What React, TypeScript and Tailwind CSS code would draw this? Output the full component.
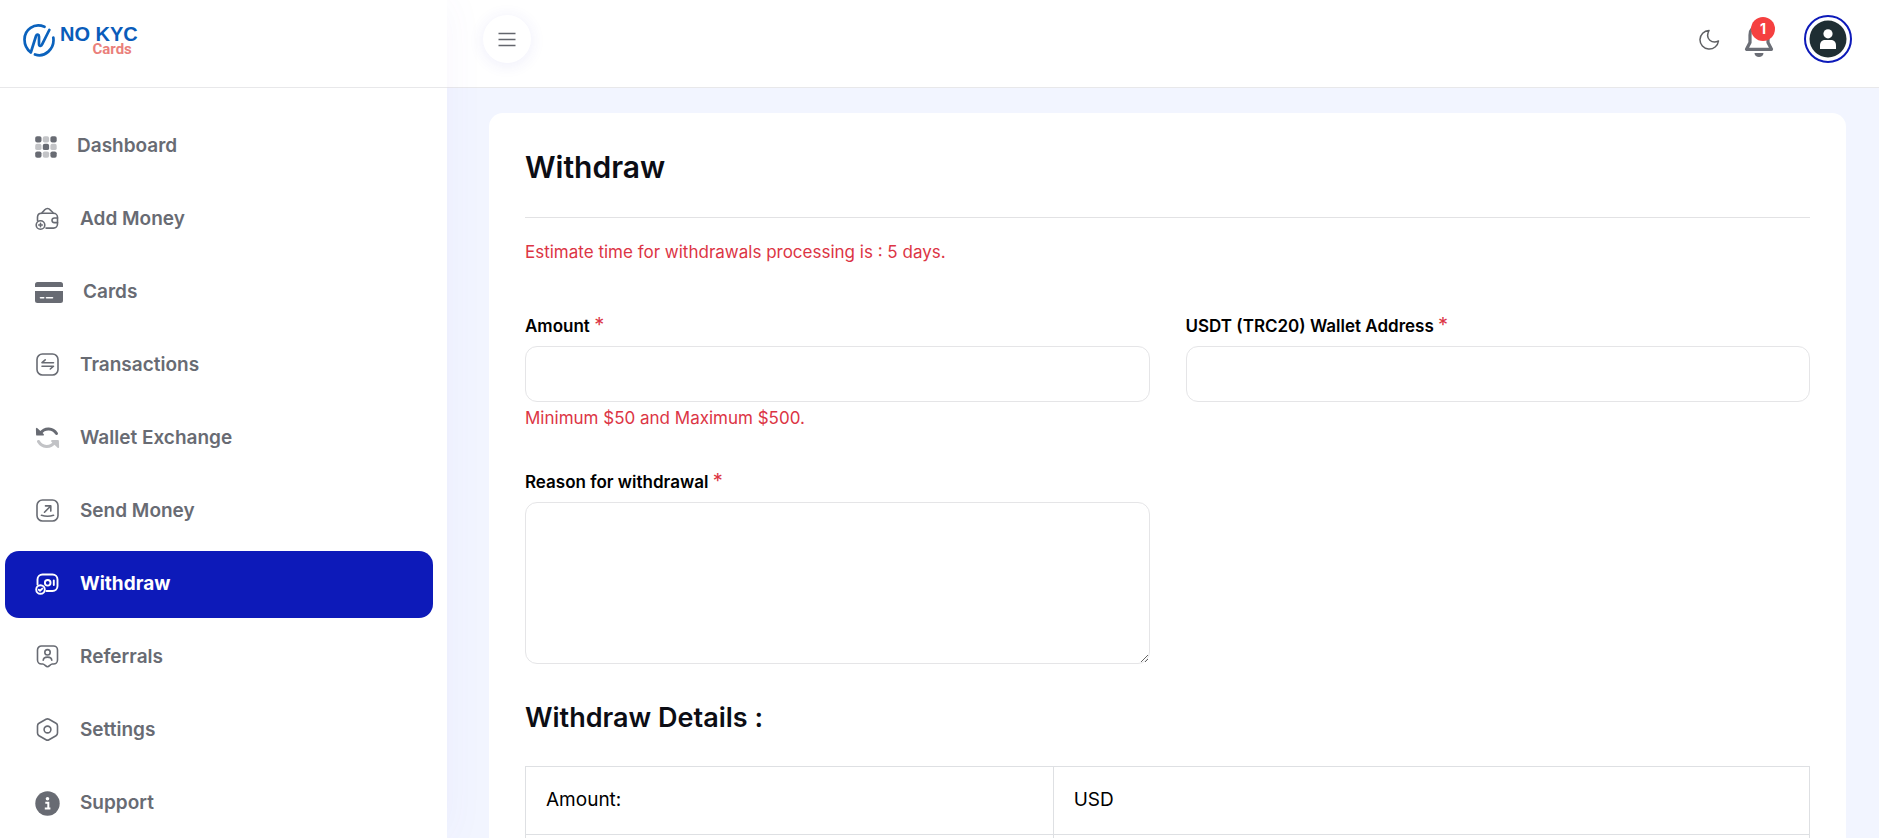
import type { ReactNode } from "react";

type NavItem = { label: string; icon: ReactNode; active?: boolean };

const line = {
  width: 25,
  height: 25,
  viewBox: "0 0 25 25",
  fill: "none",
  stroke: "currentColor",
  strokeWidth: 1.6,
  strokeLinecap: "round" as const,
  strokeLinejoin: "round" as const,
  "aria-hidden": true,
};

const DashboardIcon = () => (
  <svg width="22" height="22" viewBox="0 0 22 22" fill="currentColor" aria-hidden="true">
    {[0, 1, 2].map((row) =>
      [0, 1, 2].map((col) => (
        <rect
          key={`${row}-${col}`}
          x={0.2 + col * 7.6}
          y={0.2 + row * 7.6}
          width="6.3"
          height="6.3"
          rx="1.9"
          opacity={(row + col) % 2 ? 0.4 : 1}
        />
      )),
    )}
  </svg>
);

const AddMoneyIcon = () => (
  <svg {...line}>
    <path d="M2.500 13.500V10a4 4 0 0 1 4-3.700h12a4 4 0 0 1 4 4v6.800a4 4 0 0 1-4 4H11" />
    <path d="M22.500 11h-3.200a2.300 2.300 0 0 0 0 4.600h3.200" />
    <path d="M6.800 6.300C7.500 4.500 9 4 9.800 2.700c1.400-1.700 4-1.700 5.300 0C16 4 17.500 4.500 18.200 6.300" />
    <circle cx="5.500" cy="18" r="4.300" />
    <path d="M5.500 16.200v3.600M3.700 18h3.600" />
  </svg>
);

const CardsIcon = () => (
  <svg width="28" height="21" viewBox="0 0 28 21" fill="currentColor" aria-hidden="true">
    <path d="M2.500 0h23A2.500 2.500 0 0 1 28 2.500V5H0V2.500A2.500 2.500 0 0 1 2.500 0Z" />
    <path
      fillRule="evenodd"
      d="M0 9h28v9.500a2.500 2.500 0 0 1-2.500 2.500h-23A2.500 2.500 0 0 1 0 18.500V9Zm5.500 6a.7.7 0 0 0 0 1.600h3.200a.7.7 0 0 0 0-1.600H5.500Zm6 0a.7.7 0 0 0 0 1.600h6a.7.7 0 0 0 0-1.600h-6Z"
    />
  </svg>
);

const TransactionsIcon = () => (
  <svg {...line}>
    <rect x="2" y="1" width="21" height="21" rx="5.500" />
    <path d="M18.500 9.700H7l3.200-2.800M7 13.200h11.500l-3.200 2.800" />
  </svg>
);

const ExchangeIcon = () => (
  <svg {...line} strokeWidth="3">
    <path d="M5.500 7C10 1 18 2 21.500 7.500" />
    <path d="M1.800 2.800 2 8.700h6Z" fill="currentColor" strokeWidth="1.800" />
    <g opacity=".4">
      <path d="M3.500 15.500C7 21.500 15 22.500 20 16" />
      <path d="M23.200 21 23 15h-6Z" fill="currentColor" strokeWidth="1.800" />
    </g>
  </svg>
);

const SendIcon = () => (
  <svg {...line}>
    <rect x="2" y="1" width="21" height="21" rx="5.500" />
    <path d="m9.500 13.200 6-6M10.500 6.900h5.300v5.200M6.500 16.300c4 1.300 8 1.300 12 0" />
  </svg>
);

const WithdrawIcon = () => (
  <svg {...line} strokeWidth="1.900">
    <path d="M2.500 12.500v-5a5 5 0 0 1 5-5h10a5 5 0 0 1 5 5V14a5 5 0 0 1-5 5h-6" />
    <circle cx="12.700" cy="10.800" r="2.800" />
    <path d="M18.800 8.500v4.600" />
    <circle cx="5.500" cy="17.500" r="4.300" />
    <path d="m3.800 17.700 1.200 1 2.300-2.100" />
  </svg>
);

const ReferralsIcon = () => (
  <svg {...line}>
    <path d="M6.500 1h12a4 4 0 0 1 4 4v10a4 4 0 0 1-4 4h-1.300c-1.700 0-3 2.700-4.700 2.700S9.500 19 7.800 19H6.500a4 4 0 0 1-4-4V5a4 4 0 0 1 4-4Z" />
    <circle cx="12.500" cy="7.300" r="2.700" />
    <path d="M8.200 15.300c.3-4.300 8.300-4.300 8.600 0" />
  </svg>
);

const SettingsIcon = () => (
  <svg {...line}>
    <path d="m14 1.300 7 4a3 3 0 0 1 1.500 2.600v7.200a3 3 0 0 1-1.500 2.600l-7 4a3 3 0 0 1-3 0l-7-4a3 3 0 0 1-1.500-2.600V7.900A3 3 0 0 1 4 5.300l7-4a3 3 0 0 1 3 0Z" />
    <circle cx="12.500" cy="11.500" r="3.400" />
  </svg>
);

const SupportIcon = () => (
  <svg width="25" height="25" viewBox="0 0 25 25" fill="currentColor" aria-hidden="true">
    <circle cx="12.500" cy="12.500" r="12.200" />
    <circle cx="12.500" cy="7.800" r="1.800" fill="#fff" />
    <path d="M10.300 11.800h3v5.300M9.800 17.500h5.600" fill="none" stroke="#fff" strokeWidth="2" />
  </svg>
);

const navItems: NavItem[] = [
  { label: "Dashboard", icon: <DashboardIcon /> },
  { label: "Add Money", icon: <AddMoneyIcon /> },
  { label: "Cards", icon: <CardsIcon /> },
  { label: "Transactions", icon: <TransactionsIcon /> },
  { label: "Wallet Exchange", icon: <ExchangeIcon /> },
  { label: "Send Money", icon: <SendIcon /> },
  { label: "Withdraw", icon: <WithdrawIcon />, active: true },
  { label: "Referrals", icon: <ReferralsIcon /> },
  { label: "Settings", icon: <SettingsIcon /> },
  { label: "Support", icon: <SupportIcon /> },
];

function Logo() {
  return (
    <a href="#" className="flex items-center gap-1">
      <svg width="34" height="34" viewBox="0 0 34 34" fill="none" stroke="#0b62bd" strokeWidth="2.700" strokeLinecap="round" strokeLinejoin="round" aria-hidden="true">
        <path d="M22.500 3.800C12-.5 2.500 6.500 2.500 16.500c0 6 2.500 10 6.300 13L14 13c.8-2.300 3-1.800 3 .5v7.500c0 2.300 2.400 2.500 3.100.3L27.300 7" />
        <path d="M31.300 14.500C33 26 22.500 35 13 31.500" />
      </svg>
      <span className="flex flex-col font-bold">
        <span className="font-['Liberation_Sans',sans-serif] text-xl leading-[18px] text-[#0a5cba]">NO KYC</span>
        <span className="pr-1.5 text-right font-[Roboto,sans-serif] text-[15px] leading-3 text-[#ea7f7b]">Cards</span>
      </span>
    </a>
  );
}

function Sidebar() {
  return (
    <aside className="relative z-10 w-[447px] shrink-0 bg-white shadow-[0_0_40px_rgba(90,70,220,0.05)]">
      <div className="flex h-[88px] items-start border-b border-[#e8e8ea] px-[22px] pt-[23px]">
        <Logo />
      </div>
      <nav className="flex flex-col gap-1.5 pt-[25px] pr-3.5 pb-6 pl-[5px]">
        {navItems.map((item) => (
          <a
            key={item.label}
            href="#"
            aria-current={item.active ? "page" : undefined}
            className={`flex h-[67px] items-center gap-5 rounded-[14px] px-[30px] text-[19px] ${
              item.active ? "bg-[#0d1ab9] font-bold text-white" : "font-semibold text-[#686b73]"
            }`}
          >
            {item.icon}
            {item.label}
          </a>
        ))}
      </nav>
    </aside>
  );
}

function Header() {
  return (
    <header className="flex h-[88px] items-start justify-between border-b border-[#e8e8ea] bg-white pt-[15px] pr-[27px] pl-9">
      <button
        type="button"
        aria-label="Toggle menu"
        className="relative z-20 flex size-12 items-center justify-center rounded-full bg-white text-[#63666d] shadow-[0_2px_16px_rgba(60,50,200,0.09)]"
      >
        <svg width="18" height="16" viewBox="0 0 18 16" stroke="currentColor" strokeWidth="1.600" aria-hidden="true">
          <path d="M.5 2.500h17M.5 8.500h17M.5 14.500h17" />
        </svg>
      </button>
      <div className="flex h-12 items-center">
        <button type="button" aria-label="Dark mode" className="text-[#5f6063]">
          <svg width="22" height="22" viewBox="0 0 22 22" fill="none" stroke="currentColor" strokeWidth="1.500" strokeLinejoin="round" aria-hidden="true">
            <path d="M11 2.500A9.300 9.300 0 1 0 20.500 13C14.500 16 6.500 11.500 11 2.500Z" />
          </svg>
        </button>
        <button type="button" aria-label="Notifications, 1 unread" className="relative ml-6 text-[#6b6e76]">
          <svg width="30" height="36" viewBox="0 0 30 36" aria-hidden="true">
            <path d="M15 5c-6 0-9 4-9 9v7.500L2.500 28.300h25L24 21.500V14c0-5-3-9-9-9Z" fill="none" stroke="currentColor" strokeWidth="3.200" strokeLinejoin="round" />
            <path d="M10.500 32h9c0 5.300-9 5.300-9 0Z" fill="currentColor" />
          </svg>
          <span className="absolute -top-1 left-[7px] flex size-6 items-center justify-center rounded-full bg-[#f54040] text-sm font-bold text-white">
            1
          </span>
        </button>
        <button type="button" aria-label="Account" className="ml-[30px] flex size-12 items-center justify-center rounded-full border-2 border-[#0d1ab9]">
          <svg width="38" height="38" viewBox="0 0 38 38" aria-hidden="true">
            <circle cx="19" cy="19" r="18.500" fill="#1f2e33" />
            <circle cx="19" cy="13.800" r="4.600" fill="#fff" />
            <path d="M11 29v-3.500c0-4 2.500-5.500 5-5.500h6c2.500 0 5 1.500 5 5.500V29Z" fill="#fff" />
          </svg>
        </button>
      </div>
    </header>
  );
}

function FieldLabel({ htmlFor, children }: { htmlFor: string; children: ReactNode }) {
  return (
    <label htmlFor={htmlFor} className="mb-2 block h-6 text-[17px] leading-6 font-semibold text-black">
      {children} <span className="text-xl leading-none font-normal text-[#dc3545]">*</span>
    </label>
  );
}

const field = "block w-full rounded-xl border border-[#e5e5e7] bg-white px-4 text-base outline-none";

export default function App() {
  return (
    <div className="flex h-screen overflow-hidden bg-[#f2f5ff] font-[Inter,sans-serif]">
      <Sidebar />
      <div className="min-w-0 flex-1">
        <Header />
        <main className="pt-[25px] pr-[33px] pl-[42px]">
          <section className="rounded-[14px] bg-white p-9">
            <h1 className="border-b border-[#e2e2e4] pb-8 text-[30px] leading-9 font-semibold text-[#0c0d14]">Withdraw</h1>
            <p className="mt-[22px] text-[17px] leading-6 text-[#dc3545]">
              Estimate time for withdrawals processing is : 5 days.
            </p>
            <form className="mt-[50px] grid grid-cols-2 gap-x-9 gap-y-10">
              <div>
                <FieldLabel htmlFor="amount">Amount</FieldLabel>
                <input id="amount" type="text" className={`${field} h-14`} />
                <p className="mt-1 text-[17px] leading-6 text-[#dc3545]">Minimum $50 and Maximum $500.</p>
              </div>
              <div>
                <FieldLabel htmlFor="wallet">USDT (TRC20) Wallet Address</FieldLabel>
                <input id="wallet" type="text" className={`${field} h-14`} />
              </div>
              <div>
                <FieldLabel htmlFor="reason">Reason for withdrawal</FieldLabel>
                <textarea id="reason" className={`${field} h-[162px] resize-y py-3`} />
              </div>
            </form>
            <h2 className="mt-[38px] text-[27px] leading-8 font-semibold text-[#0c0d14]">Withdraw Details :</h2>
            <table className="mt-8 w-full table-fixed border-collapse text-[19px] text-black">
              <colgroup>
                <col className="w-[41.1%]" />
                <col />
              </colgroup>
              <tbody>
                <tr className="h-[68px]">
                  <th scope="row" className="border border-[#dee0e3] px-5 text-left font-normal">Amount:</th>
                  <td className="border border-[#dee0e3] px-5">USD</td>
                </tr>
                <tr className="h-[68px]">
                  <th scope="row" className="border border-[#dee0e3] px-5" />
                  <td className="border border-[#dee0e3] px-5" />
                </tr>
              </tbody>
            </table>
          </section>
        </main>
      </div>
    </div>
  );
}
